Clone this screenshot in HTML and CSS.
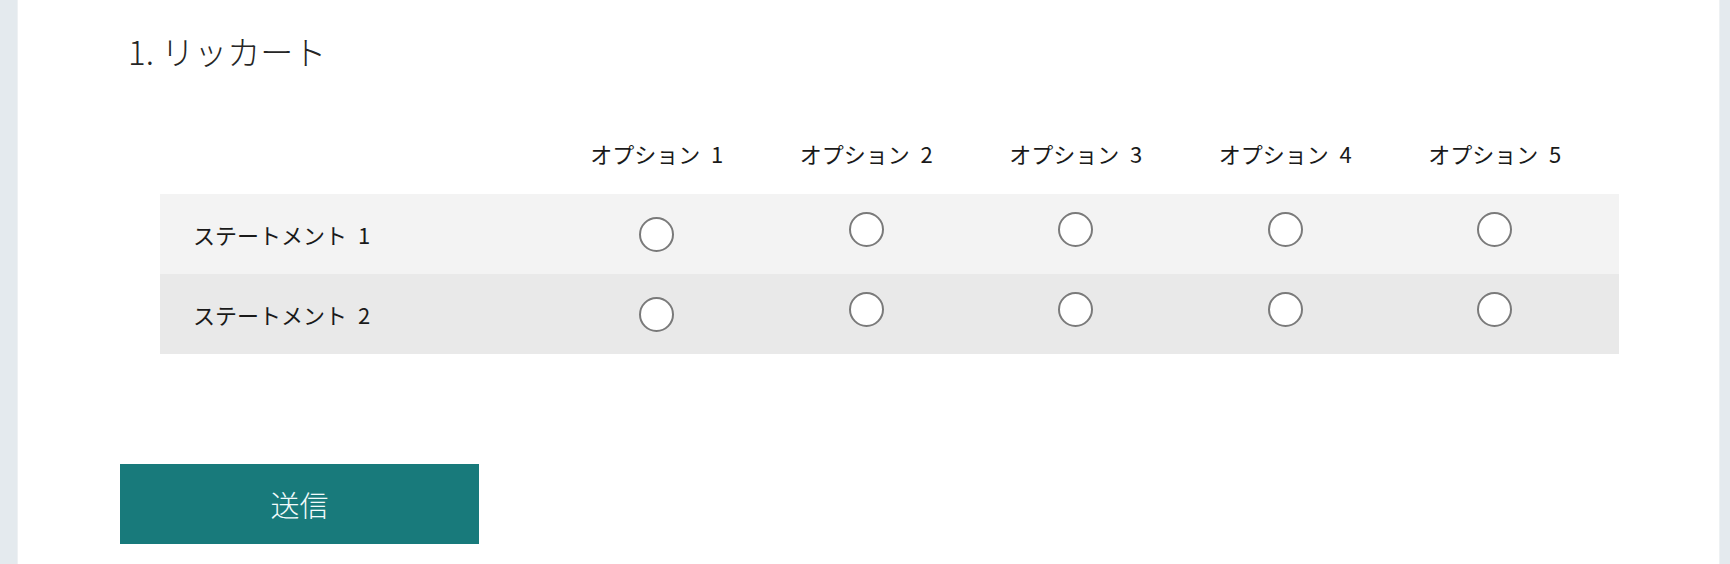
FILE: index.html
```html
<!DOCTYPE html>
<html lang="ja">
<head>
<meta charset="utf-8">
<title>リッカート</title>
<link rel="stylesheet" href="styles.css">
</head>
<body>
<div class="page">
  <div class="edge edge-left"></div>
  <main class="form">
    <h1 class="question">1. リッカート</h1>
    <div class="likert">
      <div class="head-cell"></div>
      <div class="head-cell opt">オプション 1</div>
      <div class="head-cell opt">オプション 2</div>
      <div class="head-cell opt">オプション 3</div>
      <div class="head-cell opt">オプション 4</div>
      <div class="head-cell opt">オプション 5</div>
      <div class="head-cell"></div>

      <div class="row row-a">
        <div class="label">ステートメント 1</div>
        <div class="cell"><input class="radio first" type="radio" name="s1"></div>
        <div class="cell"><input class="radio" type="radio" name="s1"></div>
        <div class="cell"><input class="radio" type="radio" name="s1"></div>
        <div class="cell"><input class="radio" type="radio" name="s1"></div>
        <div class="cell"><input class="radio" type="radio" name="s1"></div>
        <div class="cell"></div>
      </div>
      <div class="row row-b">
        <div class="label">ステートメント 2</div>
        <div class="cell"><input class="radio first" type="radio" name="s2"></div>
        <div class="cell"><input class="radio" type="radio" name="s2"></div>
        <div class="cell"><input class="radio" type="radio" name="s2"></div>
        <div class="cell"><input class="radio" type="radio" name="s2"></div>
        <div class="cell"><input class="radio" type="radio" name="s2"></div>
        <div class="cell"></div>
      </div>
    </div>
    <button class="submit" type="button">送信</button>
  </main>
  <div class="edge edge-right"></div>
</div>
</body>
</html>
```

FILE: styles.css
```css
html, body {
  margin: 0;
  padding: 0;
  background: #ffffff;
}

body {
  font-family: "Noto Sans CJK JP", "Noto Sans", sans-serif;
  color: #222222;
}

.page {
  display: flex;
  height: 564px;
  overflow: hidden;
}

.edge {
  flex: none;
  background: #e4eaee;
}

.edge-left {
  width: 17px;
  border-right: 1px solid #eef1f3;
}

.edge-right {
  width: 10px;
  border-left: 1px solid #eef1f3;
}

.form {
  flex: 1;
  padding: 0 0 0 101px;
  display: flex;
  flex-direction: column;
  align-items: flex-start;
}

.question {
  margin: 31px 0 70px 9px;
  font-size: 33px;
  line-height: 40px;
  font-weight: 300;
  color: #262626;
}

.likert {
  margin-left: 41px;
  width: 1459px;
  display: grid;
  grid-template-columns: 392px repeat(5, 209.5px) 1fr;
}

.head-cell {
  font-size: 22px;
  line-height: 24px;
  padding-bottom: 29px;
  text-align: center;
  color: #1a1a1a;
  white-space: nowrap;
  word-spacing: 6px;
}

.row {
  display: contents;
}

.row > div {
  height: 80px;
  display: flex;
  align-items: center;
  justify-content: center;
}

.row-a > div {
  background: #f3f3f3;
}

.row-b > div {
  background: #e9e9e9;
}

.row > .label {
  justify-content: flex-start;
  padding-left: 33px;
  font-size: 22px;
  color: #1a1a1a;
  word-spacing: 6px;
  white-space: nowrap;
}

.radio {
  appearance: none;
  -webkit-appearance: none;
  margin: 0 0 10px 0;
  width: 35px;
  height: 35px;
  border: 2px solid #7a7a7a;
  border-radius: 50%;
  background: #ffffff;
  box-sizing: border-box;
}

.radio.first {
  margin: 0;
}

.submit {
  margin-top: 110px;
  margin-left: 1px;
  width: 359px;
  height: 80px;
  border: none;
  border-radius: 0;
  background: #187a7b;
  color: #f2fbfb;
  font-family: "Noto Sans CJK JP", "Noto Sans", sans-serif;
  font-size: 29px;
  font-weight: 300;
  padding: 0;
}
```
